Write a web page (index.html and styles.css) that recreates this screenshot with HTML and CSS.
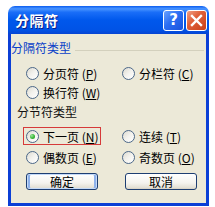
FILE: index.html
```html
<!DOCTYPE html>
<html lang="zh-CN">
  <head>
    <meta charset="UTF-8" />
    <meta name="viewport" content="width=device-width, initial-scale=1.0" />
    <title>分隔符</title>
    <link rel="stylesheet" href="styles.css">
  </head>
  <body>
    <div class="dialog">
      <div class="titlebar">
        <span class="title">分隔符</span>
        <div class="tbtns">
          <span class="tbtn help">?</span>
          <span class="tbtn close">
            <svg width="13" height="13" viewBox="0 0 13 13">
              <path d="M2 2 L11 11 M11 2 L2 11" stroke="#fff" stroke-width="2.4" stroke-linecap="square" />
            </svg>
          </span>
        </div>
      </div>
      <div class="client">
        <div class="group-label blue"><span>分隔符类型</span><i class="line"></i></div>
        <div class="options first">
          <label class="opt"><span class="radio"></span><span class="txt">分页符 (<u>P</u>)</span></label>
          <label class="opt"><span class="radio"></span><span class="txt">分栏符 (<u>C</u>)</span></label>
          <label class="opt"><span class="radio"></span><span class="txt">换行符 (<u>W</u>)</span></label>
        </div>
        <div class="group-label second"><span>分节符类型</span></div>
        <div class="options second">
          <label class="opt marked"><span class="radio on"></span><span class="txt">下一页 (<u>N</u>)</span></label>
          <label class="opt"><span class="radio"></span><span class="txt">连续 (<u>T</u>)</span></label>
          <label class="opt"><span class="radio"></span><span class="txt">偶数页 (<u>E</u>)</span></label>
          <label class="opt"><span class="radio"></span><span class="txt">奇数页 (<u>O</u>)</span></label>
        </div>
        <div class="buttons">
          <button class="btn default">确定</button>
          <button class="btn">取消</button>
        </div>
      </div>
    </div>
  </body>
</html>
```

FILE: styles.css
```css
body {
  margin: 0;
  background: #fff;
  font-family: "Noto Sans CJK SC", "DejaVu Sans", sans-serif;
  font-size: 12px;
}

.dialog {
  margin: 6px 0 0 8px;
  width: 201px;
}

.titlebar {
  height: 28px;
  border-radius: 7px 7px 0 0;
  background: linear-gradient(to bottom, #0a5cf0 0%, #4a95ff 10%, #1a6ef8 22%, #0058ec 50%, #0053e6 85%, #0644d2 100%);
  display: flex;
  align-items: center;
  justify-content: space-between;
  padding: 0 2px 0 7px;
}

.title {
  color: #fff;
  font-weight: bold;
  font-size: 14px;
  text-shadow: 1px 1px 0 #0a1f8a;
  letter-spacing: 0.5px;
}

.tbtns {
  display: flex;
  gap: 2px;
}

.tbtn {
  width: 19px;
  height: 19px;
  border: 1px solid #fff;
  border-radius: 3px;
  display: flex;
  align-items: center;
  justify-content: center;
  color: #fff;
}

.help {
  background: linear-gradient(135deg, #6aa2ff 0%, #2b6df2 45%, #1a52dc 100%);
  font-family: "DejaVu Sans", sans-serif;
  font-weight: bold;
  font-size: 15px;
}

.close {
  background: linear-gradient(135deg, #f0a085 0%, #e0603a 40%, #c8401a 100%);
}

.client {
  background: #ece9d8;
  border: 3px solid #0b3fd6;
  border-top: 0;
  height: 163px;
  padding-top: 6px;
}

.group-label {
  height: 16px;
  line-height: 16px;
  display: flex;
  align-items: center;
}

.group-label.blue {
  color: #0a40c8;
}

.group-label .line {
  flex: 1;
  height: 1px;
  background: #d3d0bd;
  margin: 4px 2px 0 4px;
}

.group-label.second {
  padding-left: 6px;
  margin-top: 4px;
  color: #111;
}

.options {
  display: grid;
  grid-template-columns: 96px 1fr;
  padding-left: 15px;
}

.options.first {
  margin-top: 9px;
  row-gap: 3px;
}

.options.second {
  margin-top: 8px;
  row-gap: 5px;
}

.opt {
  height: 16px;
  display: flex;
  align-items: center;
  gap: 4px;
  color: #000;
  white-space: nowrap;
}

.opt u {
  text-underline-offset: 1px;
}

.opt.marked {
  margin-left: -2px;
  padding-left: 2px;
  width: 74px;
  outline: 1px solid #d63a3a;
}

.radio {
  width: 11px;
  height: 11px;
  border: 1px solid #4b6788;
  border-radius: 50%;
  background: linear-gradient(135deg, #dcdad0 0%, #f3f2ee 50%, #ffffff 100%);
  display: flex;
  align-items: center;
  justify-content: center;
  flex: none;
}

.radio.on::after {
  content: "";
  width: 5px;
  height: 5px;
  border-radius: 50%;
  background: radial-gradient(circle at 35% 35%, #9ee49e 0%, #3dbb3d 50%, #1f8f1f 100%);
}

.buttons {
  display: flex;
  gap: 27px;
  padding-left: 15px;
  margin-top: 8px;
}

.btn {
  width: 72px;
  height: 17px;
  padding: 0;
  border: 1px solid #1d3e72;
  border-radius: 3px;
  background: linear-gradient(to bottom, #ffffff 0%, #f4f3ee 60%, #e3e0d5 90%, #d6d0c2 100%);
  font-family: "Noto Sans CJK SC", sans-serif;
  font-size: 12px;
  line-height: 14px;
  color: #000;
}

.btn.default {
  box-shadow: inset 0 0 0 1px #c4daf8, inset 2px 0 0 1px #8fb2ea, inset -2px 0 0 1px #8fb2ea;
}
```
